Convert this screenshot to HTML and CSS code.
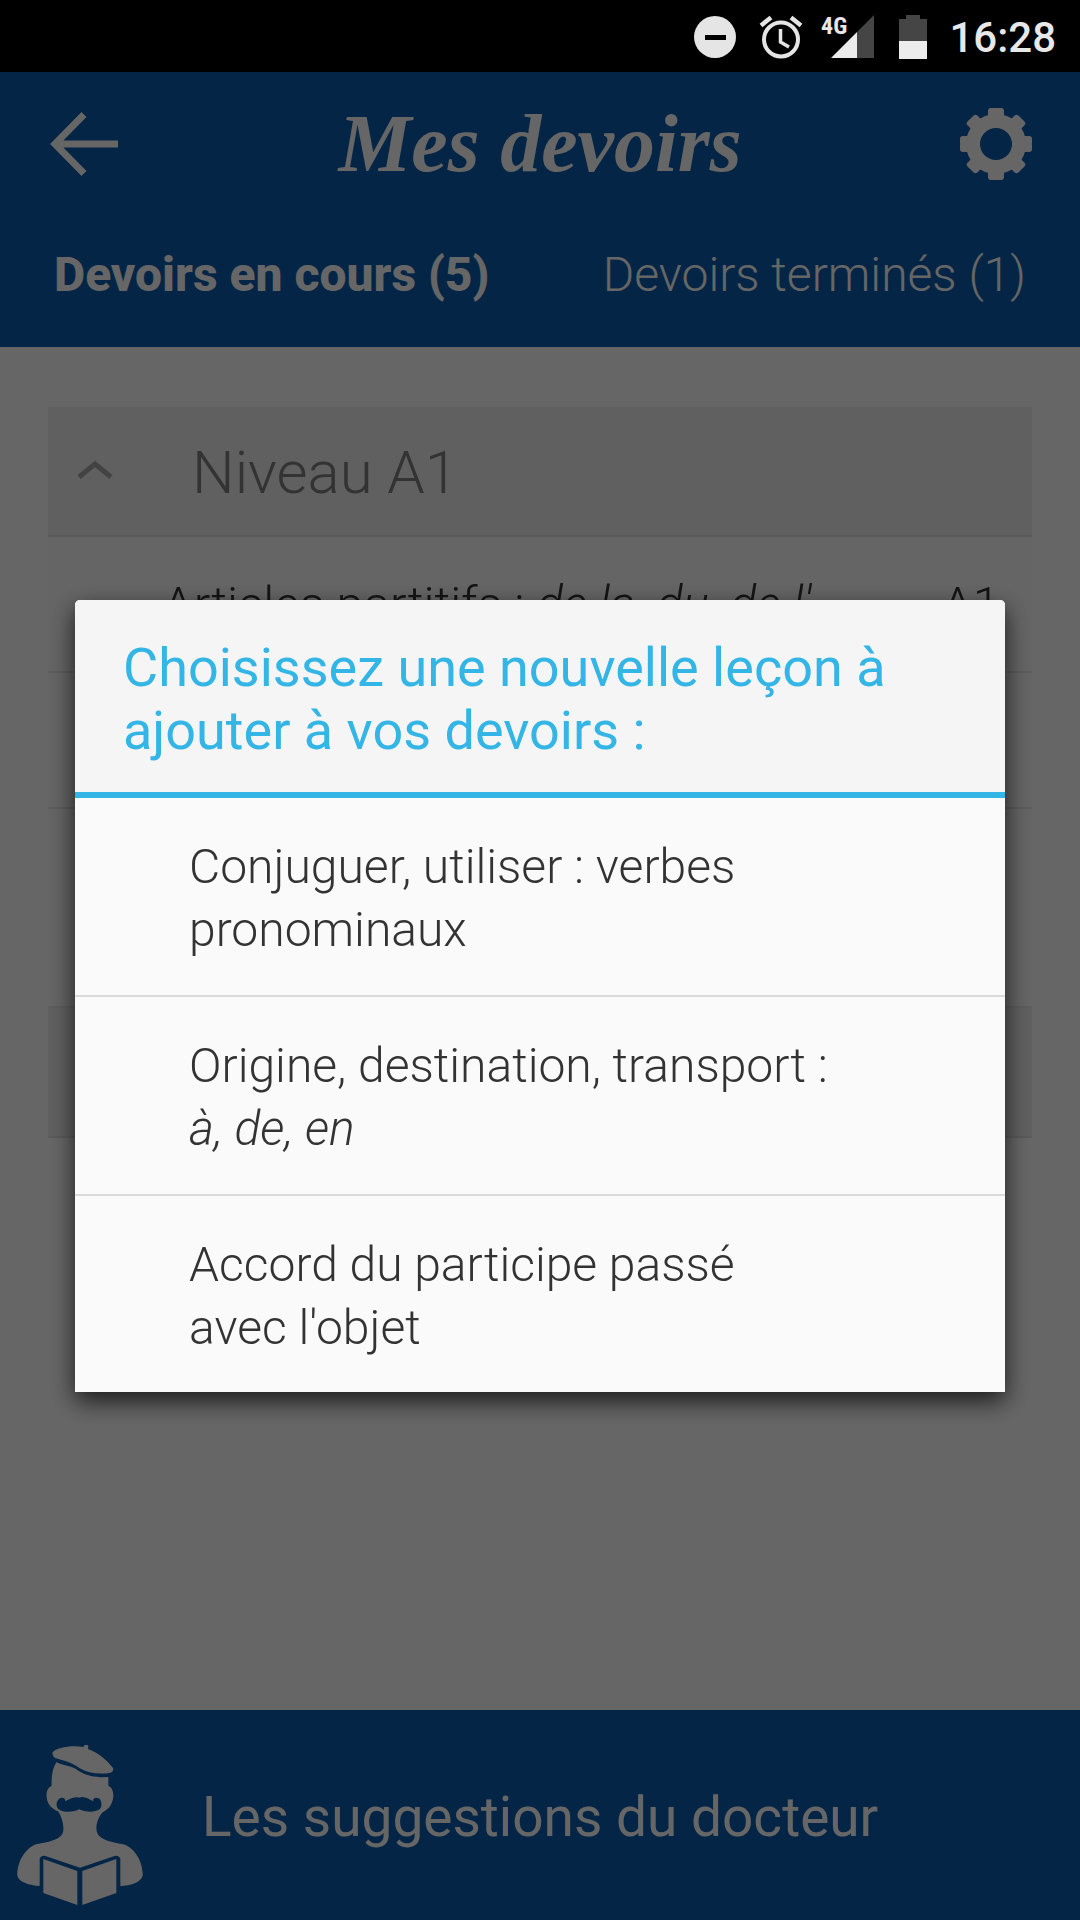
FILE: index.html
```html
<!DOCTYPE html>
<html lang="fr">
<head>
<meta charset="utf-8">
<meta name="viewport" content="width=device-width, initial-scale=1">
<title>Mes devoirs</title>
<link rel="stylesheet" href="styles.css">
</head>
<body>
<div class="screen">
  <div class="status-bar">
    <svg class="status-icons" viewBox="0 0 240 72" aria-hidden="true">
      <circle cx="25" cy="36" r="21" fill="#e5e5e5"/>
      <rect x="15" y="34" width="21" height="5" fill="#000"/>
      <g fill="none" stroke="#e5e5e5">
        <circle cx="91" cy="38.500" r="17" stroke-width="4"/>
        <path d="M90.500 28v13l8.500 5" stroke-width="3.500"/>
        <path d="M71 24.500l10-8M111 24.500l-10-8" stroke-width="4.500"/>
      </g>
      <path d="M184 14v43h-17V31z" fill="#454545"/>
      <path d="M141 57l26-26v26z" fill="#ececec"/>
      <text class="network" x="131" y="33">4G</text>
      <path d="M209 40V18h7v-4h14v4h7v22z" fill="#454545"/>
      <path d="M209 40h28v18h-28z" fill="#ececec"/>
    </svg>
    <time class="clock">16:28</time>
  </div>

  <header class="app-header">
    <div class="title-row">
      <button class="icon-button" type="button" aria-label="Retour">
        <svg class="back-icon" viewBox="0 0 68 66" aria-hidden="true">
          <path d="M34 3.500L5 33l29 29.500M5 33h63" fill="none" stroke="currentColor" stroke-width="7"/>
        </svg>
      </button>
      <h1 class="title">Mes devoirs</h1>
      <button class="icon-button" type="button" aria-label="Paramètres">
        <svg class="gear-icon" viewBox="-36 -36 72 72" aria-hidden="true">
          <g fill="currentColor">
            <rect x="-8" y="-36" width="16" height="72" rx="3"/>
            <rect x="-36" y="-8" width="72" height="16" rx="3"/>
            <rect x="-7" y="-36" width="14" height="72" rx="3" transform="rotate(45)"/>
            <rect x="-7" y="-36" width="14" height="72" rx="3" transform="rotate(-45)"/>
            <circle r="30"/>
          </g>
          <circle class="gear-hole" r="16"/>
        </svg>
      </button>
    </div>
    <nav class="tabs">
      <button class="tab tab-active" type="button">Devoirs en cours (5)</button>
      <button class="tab" type="button">Devoirs terminés (1)</button>
    </nav>
  </header>

  <main class="content">
    <section class="levels">
      <h2 class="level">
        <svg class="chevron" viewBox="0 0 36 24" aria-hidden="true">
          <path d="M2 17L18 4l16 13" fill="none" stroke="currentColor" stroke-width="5"/>
        </svg>
        Niveau A1
      </h2>
      <ul class="lessons">
        <li class="lesson"><span>Articles partitifs : <i>de la, du, de l'</i></span><span>A1</span></li>
        <li class="lesson"></li>
        <li class="lesson lesson-tall"></li>
      </ul>
      <div class="level"></div>
    </section>
  </main>

  <button class="suggestions" type="button">
    <svg class="doctor" viewBox="50 165 378 480" aria-hidden="true">
      <g fill="currentColor">
        <path d="M157 187C168 173 212 165 249 171L253 165Q260 162 264 168L263 177C297 190 318 209 338 234Q342 243 331 248C299 254 263 250 237 234C211 215 192 213 164 204Q154 197 157 187Z"/>
        <path d="M168 217C193 228 216 228 234 242C258 258 292 263 324 261V287C341 294 343 323 333 341C326 358 313 361 304 370C290 388 284 414 291 430C301 450 331 456 369 463C408 475 429 523 427 558C418 580 391 587 360 588V508Q358 496 345 497L239 533L133 497Q120 496 118 508V588C86 586 57 577 51 558C49 523 71 475 108 463C147 455 177 451 187 430C193 414 186 382 173 364C157 357 141 346 139 321C137 304 142 292 154 287C153 258 156 236 168 217Z"/>
        <path d="M129 507L231 543V645L129 609ZM348 507L246 543V645L348 609Z"/>
      </g>
      <path class="moustache" d="M237 323C221 318 206 328 195 334C196 324 185 320 177 326C167 332 166 350 175 358C192 370 222 366 237 358C252 366 282 369 298 358C307 350 304 330 295 325C285 320 276 325 279 334C266 329 253 317 237 323Z"/>
    </svg>
    <span>Les suggestions du docteur</span>
  </button>

  <div class="overlay">
    <section class="dialog" role="dialog" aria-modal="true" aria-labelledby="dialog-title">
      <h2 class="dialog-title" id="dialog-title">Choisissez une nouvelle leçon à ajouter à vos devoirs :</h2>
      <button class="choice" type="button">Conjuguer, utiliser : verbes pronominaux</button>
      <button class="choice" type="button">Origine, destination, transport : <i>à, de, en</i></button>
      <button class="choice" type="button">Accord du participe passé avec l'objet</button>
    </section>
  </div>
</div>
</body>
</html>
```
FILE: styles.css
```css
:root {
  --blue: #0a5cad;
  --accent: #33b5e5;
  --status-height: 72px;
}

* {
  box-sizing: border-box;
}

body {
  margin: 0;
  font-family: Roboto, "Liberation Sans", sans-serif;
  font-weight: 300;
  font-size: 48px;
  line-height: 63px;
  color: #333;
}

button {
  padding: 0;
  border: 0;
  background: none;
  font: inherit;
  color: inherit;
  text-align: left;
}

h1,
h2,
ul {
  margin: 0;
  padding: 0;
  font-weight: inherit;
  list-style: none;
}

svg {
  display: block;
  flex: none;
}

.screen {
  display: flex;
  flex-direction: column;
  min-height: 100vh;
  background: #fff;
}

/* Status bar */

.status-bar {
  display: flex;
  align-items: center;
  justify-content: flex-end;
  gap: 19px;
  height: var(--status-height);
  padding: 2px 24px 0 0;
  background: #000;
  color: #e8e8e8;
}

.status-icons {
  width: 240px;
  height: 72px;
}

.network {
  font: 700 24px "Roboto Condensed", Roboto, sans-serif;
  fill: #e8e8e8;
}

.clock {
  font-size: 42px;
  font-weight: 500;
}

/* Header */

.app-header {
  padding: 24px 48px 41px;
  background: var(--blue);
  color: #fff;
}

.title-row,
.tabs {
  display: flex;
  align-items: center;
  justify-content: space-between;
}

.title-row {
  height: 96px;
}

.icon-button {
  width: 72px;
}

.back-icon {
  width: 72px;
  height: 66px;
}

.gear-icon {
  width: 72px;
  height: 72px;
}

.gear-hole,
.moustache {
  fill: var(--blue);
}

.title {
  font: italic 700 82px/96px "Liberation Serif", serif;
}

.tabs {
  padding: 51px 6px 0;
}

.tab-active {
  font-weight: 800;
}

/* Lesson list */

.content {
  flex: 1;
  padding: 60px 48px;
}

.level {
  display: flex;
  align-items: center;
  gap: 79px;
  height: 130px;
  padding: 2px 0 0 29px;
  border-bottom: 2px solid #e3e3e3;
  background: #f0f0f0;
  color: #808080;
  font-size: 60px;
}

.chevron {
  width: 36px;
  height: 24px;
  color: #a8a8a8;
}

.lesson {
  display: flex;
  align-items: center;
  justify-content: space-between;
  height: 136px;
  padding: 0 32px 0 115px;
  border-bottom: 2px solid #e8e8e8;
  background: #fcfcfc;
  font-size: 49px;
}

.lesson-tall {
  height: 199px;
}

/* Footer */

.suggestions {
  display: flex;
  align-items: center;
  gap: 59px;
  height: 210px;
  padding: 4px 0 0 17px;
  background: var(--blue);
  color: #fff;
  font-size: 55px;
  font-weight: 400;
}

.doctor {
  width: 126px;
  height: 160px;
  margin-top: 16px;
}

/* Dialog */

.overlay {
  position: fixed;
  inset: var(--status-height) 0 0;
  display: flex;
  align-items: center;
  padding: 0 75px;
  background: rgba(0, 0, 0, 0.6);
}

.dialog {
  flex: 1;
  display: flex;
  flex-direction: column;
  border-radius: 5px 5px 0 0;
  background: #fafafa;
  box-shadow: 0 9px 24px rgba(0, 0, 0, 0.75);
}

.dialog-title {
  padding: 36px 48px 30px;
  border-bottom: 6px solid var(--accent);
  border-radius: 5px 5px 0 0;
  background: #f5f5f5;
  color: var(--accent);
  font-size: 54px;
  font-weight: 400;
}

.choice {
  padding: 37px 168px 34px 114px;
}

.choice + .choice {
  border-top: 2px solid #dadada;
}

.choice:last-child {
  padding-bottom: 33px;
}
```
